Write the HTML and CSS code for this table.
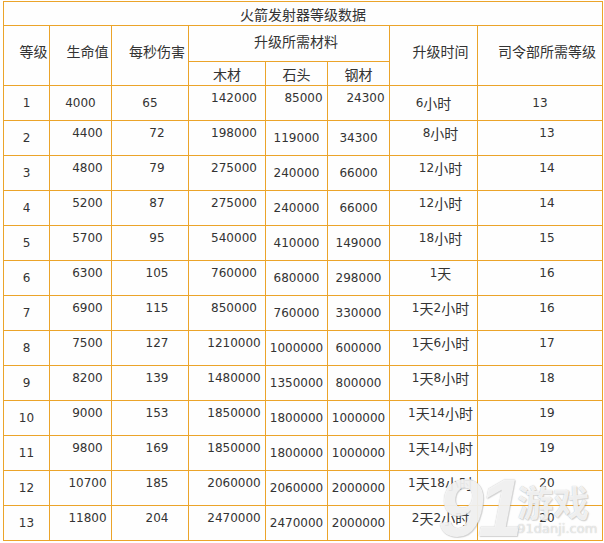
FILE: index.html
```html
<!DOCTYPE html>
<html lang="zh">
<head>
<meta charset="utf-8">
<title>火箭发射器等级数据</title>
<link rel="stylesheet" href="styles.css">
</head>
<body>
<div class="page">
  <div class="grid">
    <div class="c title zh">火箭发射器等级数据</div>
    <div class="c rs shift up zh">等级</div>
    <div class="c rs shift up zh">生命值</div>
    <div class="c rs shift up zh">每秒伤害</div>
    <div class="c cs3 shift up3 zh">升级所需材料</div>
    <div class="c rs shift up zh">升级时间</div>
    <div class="c rs shift up zh">司令部所需等级</div>
    <div class="c zh">木材</div>
    <div class="c zh">石头</div>
    <div class="c zh">钢材</div>

    <div class="c">1</div><div class="c">4000</div><div class="c">65</div><div class="c shift up">142000</div><div class="c shift up">85000</div><div class="c shift up">24300</div><div class="c">6<span class="zh">小时</span></div><div class="c">13</div>

    <div class="c">2</div><div class="c shift up">4400</div><div class="c shift up">72</div><div class="c shift up">198000</div><div class="c">119000</div><div class="c">34300</div><div class="c shift up">8<span class="zh">小时</span></div><div class="c shift up">13</div>

    <div class="c">3</div><div class="c shift up">4800</div><div class="c shift up">79</div><div class="c shift up">275000</div><div class="c">240000</div><div class="c">66000</div><div class="c shift up">12<span class="zh">小时</span></div><div class="c shift up">14</div>

    <div class="c">4</div><div class="c shift up">5200</div><div class="c shift up">87</div><div class="c shift up">275000</div><div class="c">240000</div><div class="c">66000</div><div class="c shift up">12<span class="zh">小时</span></div><div class="c shift up">14</div>

    <div class="c">5</div><div class="c shift up">5700</div><div class="c shift up">95</div><div class="c shift up">540000</div><div class="c">410000</div><div class="c">149000</div><div class="c shift up">18<span class="zh">小时</span></div><div class="c shift up">15</div>

    <div class="c">6</div><div class="c shift up">6300</div><div class="c shift up">105</div><div class="c shift up">760000</div><div class="c">680000</div><div class="c">298000</div><div class="c shift up">1<span class="zh">天</span></div><div class="c shift up">16</div>

    <div class="c">7</div><div class="c shift up">6900</div><div class="c shift up">115</div><div class="c shift up">850000</div><div class="c">760000</div><div class="c">330000</div><div class="c shift up">1<span class="zh">天</span>2<span class="zh">小时</span></div><div class="c shift up">16</div>

    <div class="c">8</div><div class="c shift up">7500</div><div class="c shift up">127</div><div class="c shift up">1210000</div><div class="c">1000000</div><div class="c">600000</div><div class="c shift up">1<span class="zh">天</span>6<span class="zh">小时</span></div><div class="c shift up">17</div>

    <div class="c">9</div><div class="c shift up">8200</div><div class="c shift up">139</div><div class="c shift up">1480000</div><div class="c">1350000</div><div class="c">800000</div><div class="c shift up">1<span class="zh">天</span>8<span class="zh">小时</span></div><div class="c shift up">18</div>

    <div class="c">10</div><div class="c shift up">9000</div><div class="c shift up">153</div><div class="c shift up">1850000</div><div class="c">1800000</div><div class="c">1000000</div><div class="c shift up">1<span class="zh">天</span>14<span class="zh">小时</span></div><div class="c shift up">19</div>

    <div class="c">11</div><div class="c shift up">9800</div><div class="c shift up">169</div><div class="c shift up">1850000</div><div class="c">1800000</div><div class="c">1000000</div><div class="c shift up">1<span class="zh">天</span>14<span class="zh">小时</span></div><div class="c shift up">19</div>

    <div class="c">12</div><div class="c shift up">10700</div><div class="c shift up">185</div><div class="c shift up">2060000</div><div class="c">2060000</div><div class="c">2000000</div><div class="c shift up">1<span class="zh">天</span>18<span class="zh">小时</span></div><div class="c shift up">20</div>

    <div class="c">13</div><div class="c shift up">11800</div><div class="c shift up">204</div><div class="c shift up">2470000</div><div class="c">2470000</div><div class="c">2000000</div><div class="c shift up">2<span class="zh">天</span>2<span class="zh">小时</span></div><div class="c shift up">20</div>
  </div>

  <div class="wm" aria-hidden="true">
    <span class="wm-num">91</span>
    <span class="wm-side">
      <span class="wm-cn">游戏</span>
      <span class="wm-url">91danji.com</span>
    </span>
  </div>
</div>
</body>
</html>
```

FILE: styles.css
```css
html, body {
  margin: 0;
  padding: 0;
  background: #ffffff;
}

.page {
  position: relative;
  width: 604px;
  height: 543px;
  padding: 1px 0 0 3px;
  box-sizing: border-box;
  overflow: hidden;
}

.grid {
  display: grid;
  grid-template-columns: 45px 61px 76px 76px 61px 61px 87px 124px;
  grid-template-rows: 23px 35px 23px repeat(13, 34px);
  gap: 1px;
  padding: 1px;
  width: max-content;
  background: #eba42a;
  font-family: "DejaVu Sans", "Noto Sans CJK SC", sans-serif;
  font-size: 12px;
  line-height: 16px;
  color: #333333;
}

.c {
  background: #fefefe;
  display: flex;
  align-items: center;
  justify-content: center;
  white-space: nowrap;
  box-sizing: border-box;
}

.zh {
  font-family: "Noto Sans CJK SC", "DejaVu Sans", sans-serif;
  font-size: 14px;
}

.title {
  grid-column: 1 / -1;
}

.rs {
  grid-row: span 2;
}

.cs3 {
  grid-column: span 3;
}

.shift {
  padding-left: 14px;
}

.up {
  padding-bottom: 10px;
}

.up3 {
  padding-bottom: 6px;
}

/* watermark */
.wm {
  position: absolute;
  left: 438px;
  top: 472px;
  display: flex;
  align-items: flex-start;
  pointer-events: none;
}

.wm-num {
  font-family: "Liberation Sans", sans-serif;
  font-weight: bold;
  font-style: italic;
  font-size: 82px;
  line-height: 72px;
  letter-spacing: -6px;
  color: rgba(255, 255, 255, 0.82);
  text-shadow: 0 0 1px rgba(130, 130, 130, 0.55), 1px 1px 1px rgba(150, 150, 150, 0.35);
}

.wm-side {
  display: flex;
  flex-direction: column;
  align-items: flex-start;
  padding-top: 9px;
}

.wm-cn {
  font-family: "Noto Sans CJK SC", sans-serif;
  font-weight: bold;
  font-size: 36px;
  line-height: 40px;
  color: rgba(255, 255, 255, 0.82);
  text-shadow: 0 0 1px rgba(130, 130, 130, 0.55), 1px 1px 1px rgba(150, 150, 150, 0.35);
}

.wm-url {
  font-family: "DejaVu Sans", sans-serif;
  font-size: 13px;
  line-height: 16px;
  color: rgba(255, 255, 255, 0.65);
  text-shadow: 0 0 1px rgba(130, 130, 130, 0.6);
}
```
